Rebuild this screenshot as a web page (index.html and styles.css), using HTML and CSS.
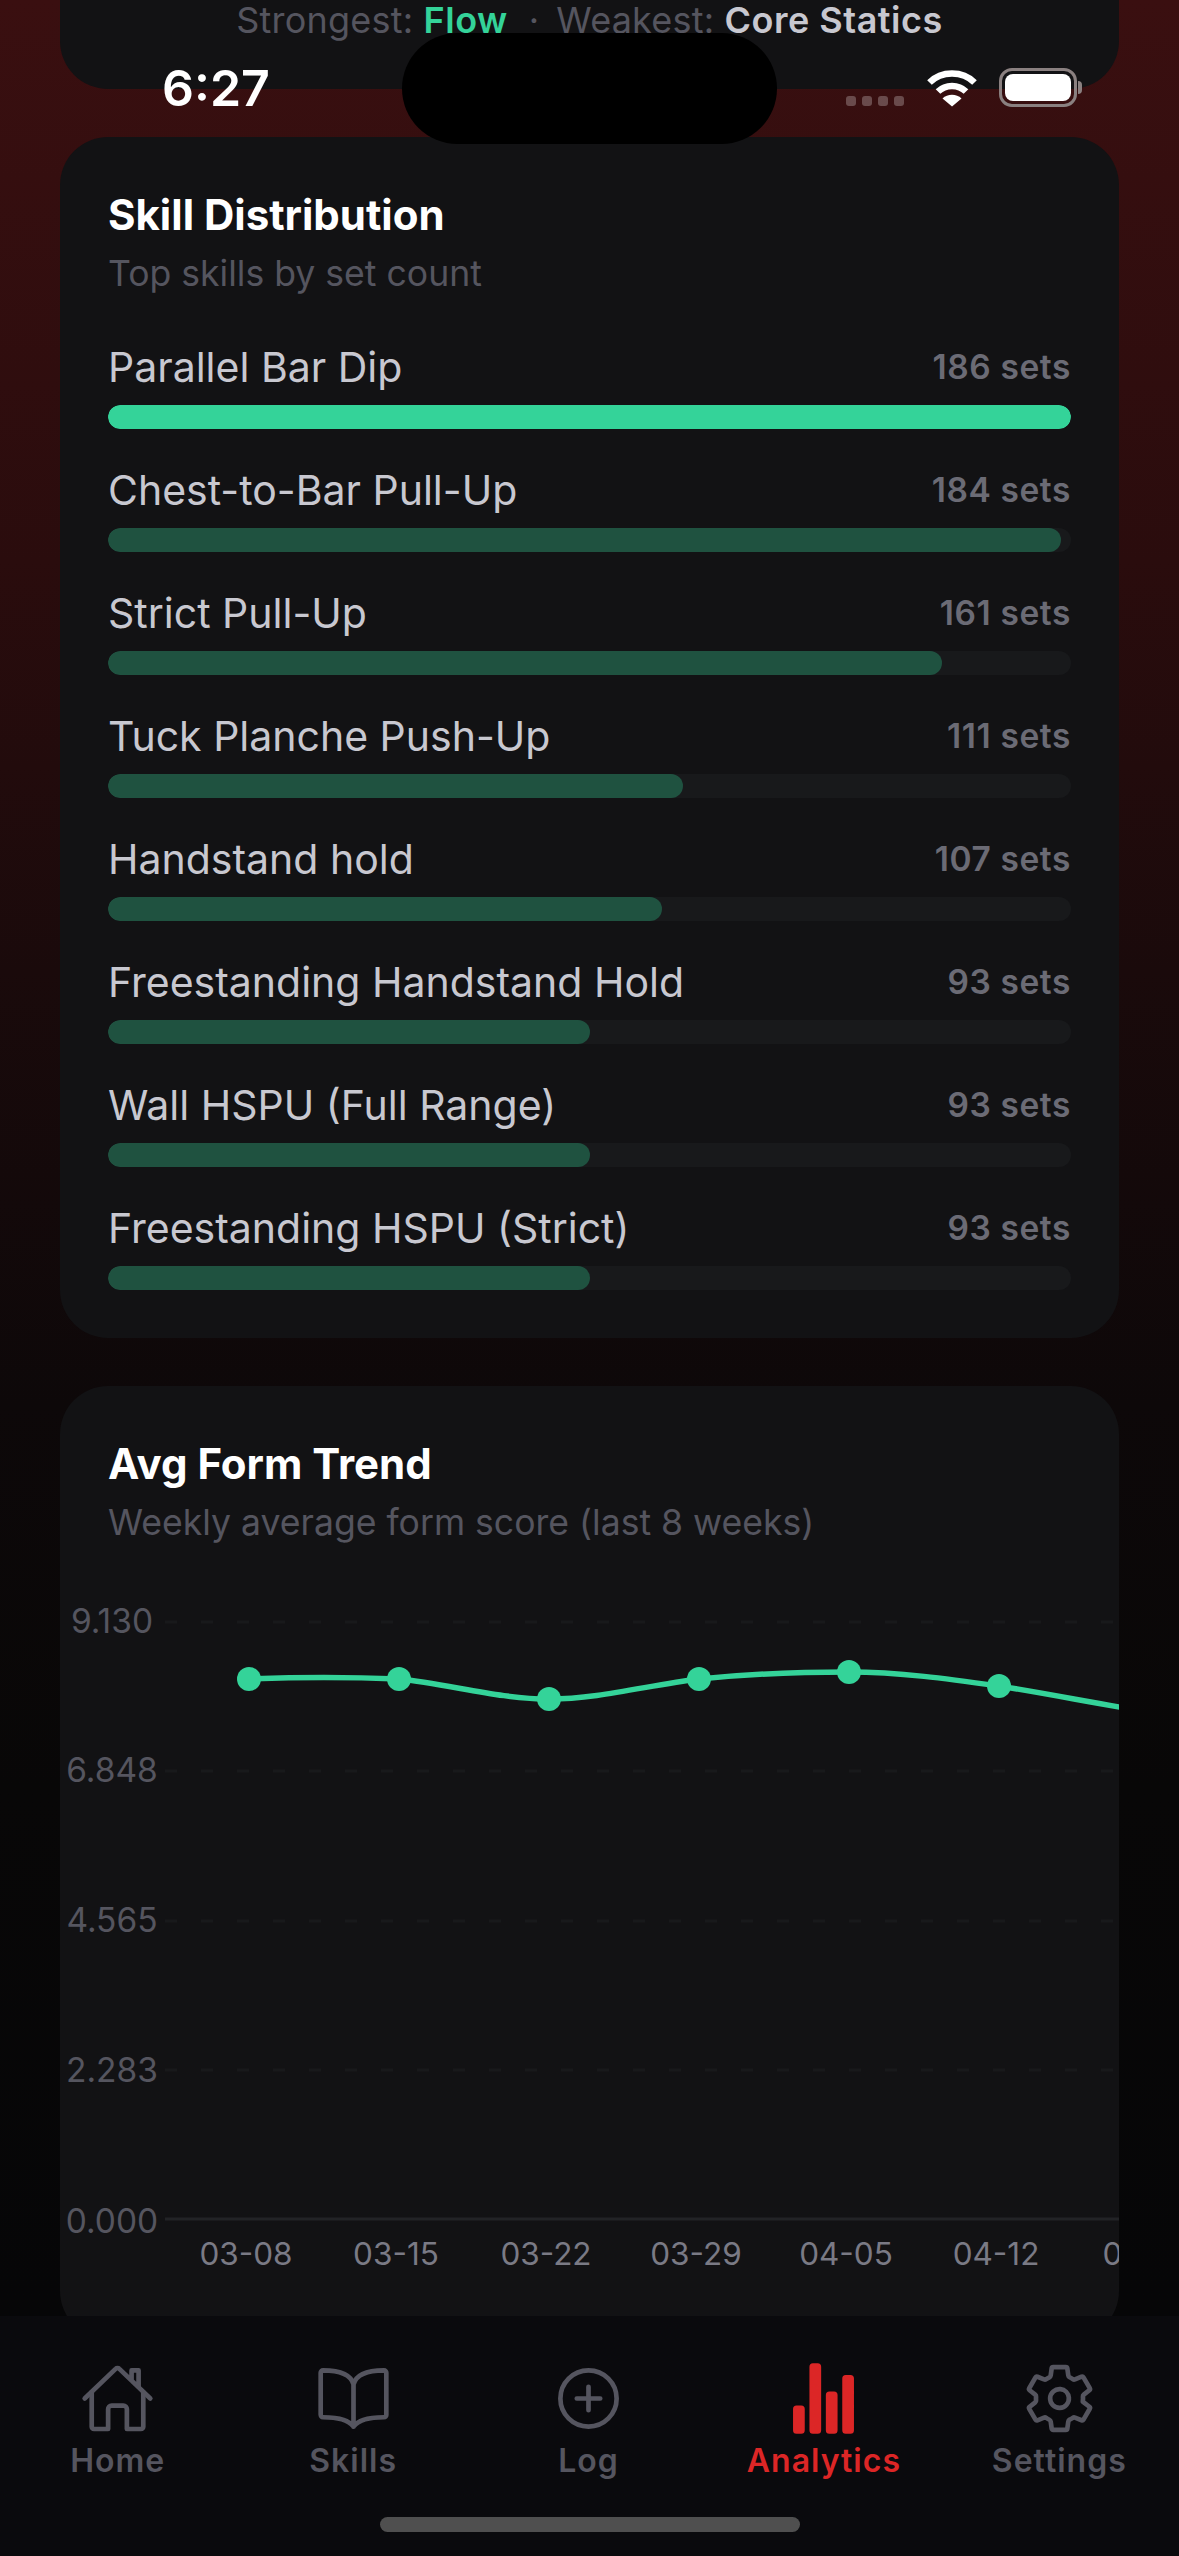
FILE: index.html
```html
<!DOCTYPE html>
<html lang="en">
<head>
<meta charset="utf-8">
<title>Analytics</title>
<link rel="stylesheet" href="styles.css">
</head>
<body>
<div class="phone">
  <main class="scroll">
    <section class="card card-top">
      <p class="summary">Strongest: <b class="flow">Flow</b><span class="sep">·</span>Weakest: <b class="core">Core Statics</b></p>
    </section>
    <section class="card card-skills">
      <h2>Skill Distribution</h2>
      <p class="sub">Top skills by set count</p>
      <div class="rows">
        <div class="row"><div class="row-head"><span class="name">Parallel Bar Dip</span><span class="count">186 sets</span></div><div class="track"><div class="fill top" style="width:100%"></div></div></div>
        <div class="row"><div class="row-head"><span class="name">Chest-to-Bar Pull-Up</span><span class="count">184 sets</span></div><div class="track"><div class="fill" style="width:98.92%"></div></div></div>
        <div class="row"><div class="row-head"><span class="name">Strict Pull-Up</span><span class="count">161 sets</span></div><div class="track"><div class="fill" style="width:86.56%"></div></div></div>
        <div class="row"><div class="row-head"><span class="name">Tuck Planche Push-Up</span><span class="count">111 sets</span></div><div class="track"><div class="fill" style="width:59.68%"></div></div></div>
        <div class="row"><div class="row-head"><span class="name">Handstand hold</span><span class="count">107 sets</span></div><div class="track"><div class="fill" style="width:57.53%"></div></div></div>
        <div class="row"><div class="row-head"><span class="name">Freestanding Handstand Hold</span><span class="count">93 sets</span></div><div class="track"><div class="fill" style="width:50%"></div></div></div>
        <div class="row"><div class="row-head"><span class="name">Wall HSPU (Full Range)</span><span class="count">93 sets</span></div><div class="track"><div class="fill" style="width:50%"></div></div></div>
        <div class="row"><div class="row-head"><span class="name">Freestanding HSPU (Strict)</span><span class="count">93 sets</span></div><div class="track"><div class="fill" style="width:50%"></div></div></div>
      </div>
    </section>
    <section class="card card-form">
      <h2>Avg Form Trend</h2>
      <p class="sub">Weekly average form score (last 8 weeks)</p>
      <svg class="chart" width="1059" height="780" viewBox="60 1560 1059 780">
        <g class="grid">
          <line x1="165" x2="1119" y1="1622" y2="1622"/>
          <line x1="165" x2="1119" y1="1771" y2="1771"/>
          <line x1="165" x2="1119" y1="1921" y2="1921"/>
          <line x1="165" x2="1119" y1="2070" y2="2070"/>
        </g>
        <line class="axis" x1="165" x2="1119" y1="2219" y2="2219"/>
        <g class="ylab">
          <text x="112" y="1633">9.130</text>
          <text x="112" y="1782">6.848</text>
          <text x="112" y="1932">4.565</text>
          <text x="112" y="2082">2.283</text>
          <text x="112" y="2233">0.000</text>
        </g>
        <g class="xlab">
          <text x="246" y="2265">03-08</text>
          <text x="396" y="2265">03-15</text>
          <text x="546" y="2265">03-22</text>
          <text x="696" y="2265">03-29</text>
          <text x="846" y="2265">04-05</text>
          <text x="996" y="2265">04-12</text>
          <text x="1146" y="2265">04-19</text>
        </g>
        <path class="line" d="M249 1679C299 1677 349 1677 399 1679C449 1684 499 1699 549 1699C599 1699 649 1685 699 1679C749 1674 799 1672 849 1672C899 1672 949 1679 999 1686C1049 1694 1099 1704 1149 1712"/>
        <g class="dots">
          <circle cx="249" cy="1679" r="12"/>
          <circle cx="399" cy="1679" r="12"/>
          <circle cx="549" cy="1699" r="12"/>
          <circle cx="699" cy="1679" r="12"/>
          <circle cx="849" cy="1672" r="12"/>
          <circle cx="999" cy="1686" r="12"/>
          <circle cx="1149" cy="1712" r="12"/>
        </g>
      </svg>
    </section>
  </main>
  <nav class="tabs">
    <div class="tab">
      <svg class="ico" viewBox="0 0 512 512"><path d="M80 212v236a16 16 0 0016 16h96V328a24 24 0 0124-24h80a24 24 0 0124 24v136h96a16 16 0 0016-16V212"/><path d="M480 256L266.89 52c-5-5.28-16.69-5.34-22 0L32 256M400 179V64h-48v69"/></svg>
      <span>Home</span>
    </div>
    <div class="tab">
      <svg class="ico" viewBox="0 0 512 512"><path d="M256 160c16-63.16 76.43-95.41 208-96a15.94 15.94 0 0116 16v288a16 16 0 01-16 16c-128 0-177.45 25.81-208 64-30.37-38-80-64-208-64-9.88 0-16-8.05-16-18V80a15.94 15.94 0 0116-16c131.57.59 192 32.84 208 96zM256 160v288"/></svg>
      <span>Skills</span>
    </div>
    <div class="tab">
      <svg class="ico" viewBox="0 0 512 512"><path d="M448 256c0-106-86-192-192-192S64 150 64 256s86 192 192 192 192-86 192-192z"/><path d="M256 176v160M336 256H176"/></svg>
      <span>Log</span>
    </div>
    <div class="tab active">
      <svg class="ico solid" viewBox="0 0 512 512"><path d="M104 496H72a24 24 0 01-24-24V328a24 24 0 0124-24h32a24 24 0 0124 24v144a24 24 0 01-24 24zM328 496h-32a24 24 0 01-24-24V232a24 24 0 0124-24h32a24 24 0 0124 24v240a24 24 0 01-24 24zM440 496h-32a24 24 0 01-24-24V120a24 24 0 0124-24h32a24 24 0 0124 24v352a24 24 0 01-24 24zM216 496h-32a24 24 0 01-24-24V40a24 24 0 0124-24h32a24 24 0 0124 24v432a24 24 0 01-24 24z"/></svg>
      <span>Analytics</span>
    </div>
    <div class="tab">
      <svg class="ico" viewBox="0 0 512 512"><path d="M262.29 192.31a64 64 0 1057.4 57.4 64.13 64.13 0 00-57.4-57.4zM416.39 256a154.34 154.34 0 01-1.53 20.79l45.21 35.46a10.81 10.81 0 012.45 13.75l-42.77 74a10.81 10.81 0 01-13.14 4.59l-44.9-18.08a16.11 16.11 0 00-15.17 1.75A164.48 164.48 0 01325 400.8a15.94 15.94 0 00-8.82 12.14l-6.73 47.89a11.08 11.08 0 01-10.68 9.17h-85.54a11.11 11.11 0 01-10.69-8.87l-6.72-47.82a16.07 16.07 0 00-9-12.22 155.3 155.3 0 01-21.46-12.57 16 16 0 00-15.11-1.71l-44.89 18.07a10.81 10.81 0 01-13.14-4.58l-42.77-74a10.8 10.8 0 012.45-13.75l38.21-30a16.05 16.05 0 006-14.08c-.36-4.17-.58-8.33-.58-12.5s.21-8.27.58-12.35a16 16 0 00-6.07-13.94l-38.19-30A10.81 10.81 0 0149.48 186l42.77-74a10.81 10.81 0 0113.14-4.59l44.9 18.08a16.11 16.11 0 0015.17-1.75A164.48 164.48 0 01187 111.2a15.94 15.94 0 008.82-12.14l6.73-47.89A11.08 11.08 0 01213.23 42h85.54a11.11 11.11 0 0110.69 8.87l6.72 47.82a16.07 16.07 0 009 12.22 155.3 155.3 0 0121.46 12.57 16 16 0 0015.11 1.71l44.89-18.07a10.81 10.81 0 0113.14 4.58l42.77 74a10.8 10.8 0 01-2.45 13.75l-38.21 30a16.05 16.05 0 00-6.07 14.08c.33 4.14.55 8.3.55 12.47z"/></svg>
      <span>Settings</span>
    </div>
    <div class="home-bar"></div>
  </nav>
  <div class="island"></div>
  <div class="time">6:27</div>
  <div class="status-right">
    <div class="signal"><i></i><i></i><i></i><i></i></div>
    <svg class="wifi" width="52" height="38" viewBox="0 0 52 38"><path class="arc" d="M3.5 13.5C15.5 1.5 36.500 1.500 48.500 13.500"/><path class="arc" d="M12 22.500C19.500 15 32.500 15 40 22.500"/><path class="wedge" d="M26 37.500L16.500 29.500C21.500 24.500 30.500 24.500 35.500 29.500Z"/></svg>
    <div class="battery"><div class="level"></div></div>
  </div>
</div>
</body>
</html>
```
FILE: styles.css
```css
* { box-sizing: border-box; }
html, body { margin: 0; padding: 0; }
body { width: 1179px; height: 2556px; overflow: hidden; background: #000; font-family: Inter, "Liberation Sans", sans-serif; }
.phone { position: relative; width: 1179px; height: 2556px; display: flex; flex-direction: column; overflow: hidden;
  background: linear-gradient(180deg, #3a0f10 0%, #2a0c0d 22%, #1a0a0b 38%, #0d0809 55%, #080707 70%, #060607 90%); }
.scroll { height: 2316px; overflow: hidden; padding: 0 60px; display: flex; flex-direction: column; gap: 48px; flex: none; }
.card { background: #121214; border-radius: 48px; flex: none; }
.card-top { height: 89px; border-radius: 0 0 48px 48px; text-align: center; }
.summary { margin: 0; font-size: 36px; line-height: 40px; color: #55555f; letter-spacing: .2px; }
.summary b { font-weight: 600; letter-spacing: .5px; }
.flow { color: #34d399; }
.core { color: #c8c8d0; }
.sep { margin: 0 17px 0 21px; }
.card-skills { height: 1201px; padding: 53px 48px 48px; }
.card-form { height: 953px; padding: 53px 48px 48px; }
h2 { margin: 0; font-size: 42px; line-height: 50px; font-weight: 700; color: #fff; }
.sub { margin: 9px 0 0; font-size: 35.6px; line-height: 50px; color: #55555f; }
.rows { margin-top: 31px; display: flex; flex-direction: column; gap: 24px; }
.row { height: 99px; display: flex; flex-direction: column; justify-content: flex-end; }
.row-head { display: flex; justify-content: space-between; align-items: center; height: 50px; margin-bottom: 13px; }
.name { font-size: 41px; color: #c8c8d0; }
.count { font-size: 33.5px; font-weight: 600; color: #6b6b75; letter-spacing: .6px; }
.track { height: 24px; border-radius: 12px; background: #18191b; overflow: hidden; }
.fill { height: 100%; border-radius: 12px; background: #1f5240; }
.fill.top { background: #34d399; }
.chart { display: block; margin: 12px -48px 0; overflow: hidden; }
.grid line { stroke: #18191b; stroke-width: 3; stroke-dasharray: 12 24; }
.axis { stroke: #222326; stroke-width: 3; }
.ylab text { font-size: 33.5px; fill: #55555f; text-anchor: middle; font-family: Inter, sans-serif; }
.xlab text { font-size: 31.5px; fill: #7a7a85; text-anchor: middle; font-family: Inter, sans-serif; }
.line { fill: none; stroke: #34d399; stroke-width: 5.5; }
.dots circle { fill: #34d399; }
.tabs { position: relative; flex: 1; background: #0a0a0d; display: grid; grid-template-columns: repeat(5, 1fr); padding: 45px 2px 0 0; align-content: start; }
.tab { display: flex; flex-direction: column; align-items: center; color: #55555f; }
.tab.active { color: #dc2626; }
.tab span { font-size: 32px; font-weight: 600; line-height: 40px; margin-top: 5px; letter-spacing: 1px; }
.ico { width: 75px; height: 75px; fill: none; stroke: currentColor; stroke-width: 32; stroke-linecap: round; stroke-linejoin: round; display: block; }
.ico.solid { fill: currentColor; stroke: none; }
.home-bar { position: absolute; left: 380px; top: 201px; width: 420px; height: 15px; border-radius: 8px; background: #4f4f4f; }
.island { position: absolute; left: 402px; top: 33px; width: 375px; height: 111px; border-radius: 56px; background: #000; }
.time { position: absolute; left: 162px; top: 58px; font-size: 50px; line-height: 60px; font-weight: 600; color: #fff; }
.status-right { position: absolute; left: 846px; top: 68px; width: 236px; height: 40px; display: flex; align-items: flex-end; }
.signal { display: flex; gap: 6px; margin-bottom: 2px; }
.signal i { width: 10px; height: 10px; border-radius: 3px; background: rgba(255,255,255,.25); }
.wifi { margin: 0 21px 1px 22px; display: block; }
.arc { fill: none; stroke: #fff; stroke-width: 6.5; }
.wedge { fill: #fff; }
.battery { position: relative; width: 78px; height: 39px; margin-bottom: 1px; border: 3px solid #8a8080; border-radius: 13px; padding: 3px; }
.battery::after { content: ""; position: absolute; right: -8px; top: 10px; width: 4px; height: 13px; border-radius: 0 4px 4px 0; background: #8a8080; }
.level { width: 100%; height: 100%; border-radius: 8px; background: #fff; }
```
